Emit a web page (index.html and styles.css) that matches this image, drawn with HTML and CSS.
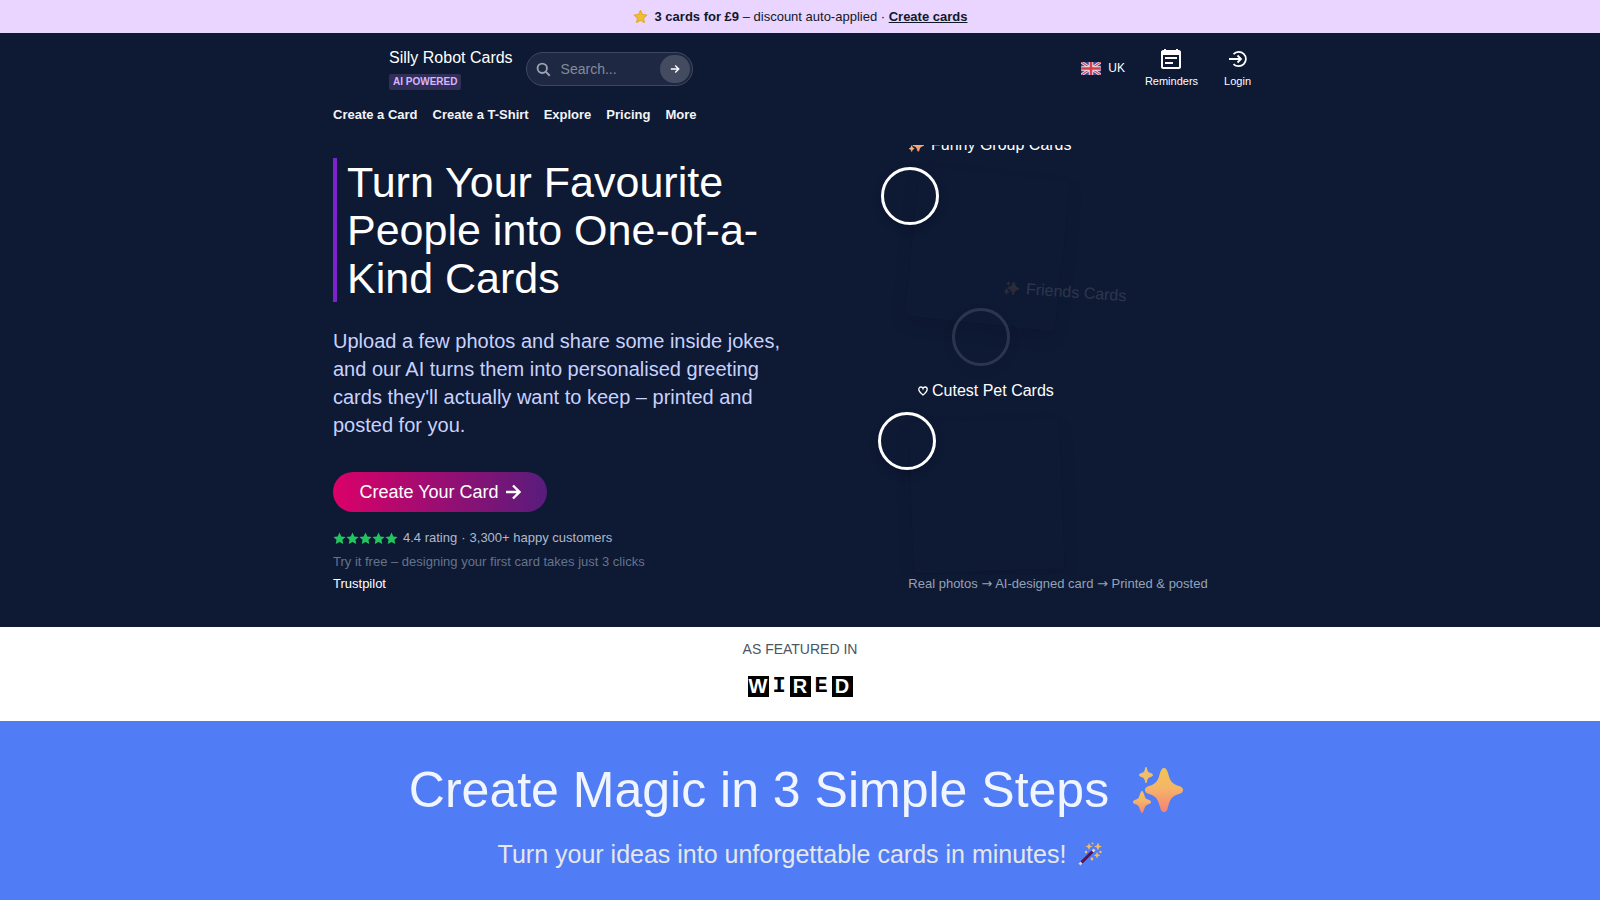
FILE: index.html
```html
<!DOCTYPE html>
<html lang="en-GB">
<head>
    <meta charset="UTF-8">
    <meta name="viewport" content="width=device-width, initial-scale=1.0">
    <title>Silly Robot Cards</title>
    <link rel="stylesheet" href="styles.css">
</head>
<body>

<!-- shared icon shapes -->
<svg class="defs" aria-hidden="true">
    <defs>
        <linearGradient id="gold" x1="0" y1="0" x2="0" y2="1">
            <stop offset="0" stop-color="#f3c552"/>
            <stop offset="0.45" stop-color="#f5b568"/>
            <stop offset="1" stop-color="#f58273"/>
        </linearGradient>
        <symbol id="sparkles" viewBox="0 0 50 46">
            <path fill="url(#gold)" d="M31 1c2 0 3 2 4 5 2 8 4 11 11 13 3 1 4 2 4 4s-1 3-4 4c-7 2-9 5-11 13-1 4-2 5-4 5s-3-1-4-5c-2-8-4-11-11-13-3-1-4-2-4-4s1-3 4-4c7-2 9-5 11-13 1-3 2-5 4-5z"/>
            <path fill="url(#gold)" d="M9 24c1 0 1 1 2 3 1 4 2 5 5 6 2 1 2 1 2 2s0 1-2 2c-3 1-4 2-5 6-1 2-1 3-2 3s-1-1-2-3c-1-4-2-5-5-6-2-1-2-1-2-2s0-1 2-2c3-1 4-2 5-6 1-2 1-3 2-3z"/>
            <path fill="#f1be68" d="M13 0c1 0 1 1 1 2 1 3 2 4 4 4 1 1 2 1 2 2s-1 1-2 2c-2 0-3 1-4 4 0 1 0 2-1 2s-1-1-1-2c-1-3-2-4-4-4-1-1-2-1-2-2s1-1 2-2c2 0 3-1 4-4 0-1 0-2 1-2z"/>
        </symbol>
        <symbol id="star" viewBox="0 0 24 24">
            <path d="M12 1l3.4 7.1 7.8 1-5.7 5.4 1.4 7.8-6.9-3.8-6.9 3.8 1.4-7.8L.8 9.1l7.8-1z"/>
        </symbol>
    </defs>
</svg>

<div class="promo">
    <svg class="promo-star" viewBox="0 0 24 24"><path fill="#eec02e" stroke="#e3ad35" stroke-width="2" stroke-linejoin="round" d="M12 2.500l3 6.200 7 .9-5.200 4.900 1.300 7-6.100-3.400-6.100 3.400 1.300-7L2 9.600l7-.9z"/></svg>
    <p><strong>3 cards for £9</strong> – discount auto-applied · <a href="#">Create cards</a></p>
</div>

<header class="header">
    <div class="wrap">
        <div class="topbar">
            <a class="brand" href="#">
                <span class="brand-name">Silly Robot Cards</span>
                <span class="brand-tag">AI POWERED</span>
            </a>
            <form class="search">
                <svg viewBox="0 0 24 24" fill="none" stroke="currentColor" stroke-width="3"><circle cx="10" cy="10" r="7.500"/><path d="M15.500 15.500L22 22"/></svg>
                <input type="text" placeholder="Search..." aria-label="Search">
                <button type="button" aria-label="Go"><svg viewBox="0 0 24 24" fill="none" stroke="currentColor" stroke-width="3.400"><path d="M2 12h19M12.500 3.500L21 12l-8.500 8.500"/></svg></button>
            </form>
            <div class="tools">
                <a class="country" href="#">
                    <svg viewBox="0 0 60 40">
                        <rect width="60" height="40" fill="#3b4a9b"/>
                        <path d="M0 0l60 40M60 0L0 40" stroke="#e9e4ee" stroke-width="9"/>
                        <path d="M0 0l60 40M60 0L0 40" stroke="#d8485a" stroke-width="4"/>
                        <path d="M30 0v40M0 20h60" stroke="#f3e6ea" stroke-width="14"/>
                        <path d="M30 0v40M0 20h60" stroke="#d93a4c" stroke-width="8"/>
                    </svg>
                    <span>UK</span>
                </a>
                <a class="tool" href="#">
                    <svg viewBox="0 0 20 20"><path fill="currentColor" fill-rule="evenodd" d="M3 0h2v1h10V0h2v1h1c1 0 2 1 2 2v15c0 1-1 2-2 2H2c-1 0-2-1-2-2V3c0-1 1-2 2-2h1zM2 6v12h16V6zM4 8h12v2H4zM4 13h8v2H4z"/></svg>
                    <span>Reminders</span>
                </a>
                <a class="tool" href="#">
                    <svg viewBox="0 0 20 20" fill="none" stroke="currentColor" stroke-width="1.800"><path d="M5.500 5A7.200 7.200 0 1 1 5.500 15M1 10h12M9.500 6.500L13 10l-3.500 3.500"/></svg>
                    <span>Login</span>
                </a>
            </div>
        </div>
        <nav class="menu">
            <a href="#">Create a Card</a>
            <a href="#">Create a T-Shirt</a>
            <a href="#">Explore</a>
            <a href="#">Pricing</a>
            <a href="#">More</a>
        </nav>
    </div>
</header>

<main>
    <section class="hero">
        <div class="wrap hero-grid">
            <div class="hero-text">
                <h1>Turn Your Favourite People into One-of-a-Kind Cards</h1>
                <p class="lead">Upload a few photos and share some inside jokes, and our AI turns them into personalised greeting cards they'll actually want to keep – printed and posted for you.</p>
                <button class="cta" type="button">Create Your Card
                    <svg viewBox="0 0 16 16" fill="none" stroke="currentColor" stroke-width="2.400"><path d="M1 8h13M8 1.500L14.500 8 8 14.500"/></svg>
                </button>
                <div class="rating">
                    <span class="stars">
                        <svg><use href="#star"/></svg><svg><use href="#star"/></svg><svg><use href="#star"/></svg><svg><use href="#star"/></svg><svg><use href="#star"/></svg>
                    </span>
                    <span>4.4 rating</span><span class="dot">·</span><span>3,300+ happy customers</span>
                </div>
                <p class="hint">Try it free – designing your first card takes just 3 clicks</p>
                <a class="trustpilot" href="#">Trustpilot</a>
            </div>
            <div class="hero-art">
                <!-- floating card samples -->
                <div class="stage">
                    <div class="card card-group"></div>
                    <div class="card card-pet"></div>
                    <div class="label label-group"><svg><use href="#sparkles"/></svg>Funny Group Cards</div>
                    <div class="face face-group"></div>
                    <div class="label label-friends"><svg><use href="#sparkles"/></svg>Friends Cards</div>
                    <div class="face face-friends"></div>
                    <div class="label label-pet"><svg class="heart" viewBox="0 0 10 10" fill="none" stroke="currentColor" stroke-width="1.300"><path d="M5 9C2.500 7 .8 5.400.8 3.300.8 1.900 1.700 1 2.900 1 3.900 1 4.700 1.600 5 2.600 5.300 1.600 6.100 1 7.100 1c1.200 0 2.100.9 2.100 2.300C9.200 5.400 7.500 7 5 9z"/></svg>Cutest Pet Cards</div>
                    <div class="face face-pet"></div>
                </div>
                <p class="caption">Real photos <span>→</span> AI-designed card <span>→</span> Printed &amp; posted</p>
            </div>
        </div>
    </section>

    <section class="featured">
        <p>AS FEATURED IN</p>
        <div class="wired"><b>W</b><i>I</i><b>R</b><i>E</i><b>D</b></div>
    </section>

    <section class="steps">
        <h2>Create Magic in 3 Simple Steps <svg><use href="#sparkles"/></svg></h2>
        <p>Turn your ideas into unforgettable cards in minutes!
            <svg viewBox="0 0 24 24">
                <path d="M2 22L16 8" stroke="#52164f" stroke-width="3"/>
                <path d="M1.500 22.500l2-2M14.500 9.500l2-2" stroke="#e8cfe0" stroke-width="3"/>
                <g fill="#f6bb66">
                    <path d="M11 1l1 2.500 2.500 1-2.500 1-1 2.500-1-2.500-2.500-1 2.500-1zM20 .5l1.200 3 2.800 1-2.800 1-1.200 3-1.200-3-2.800-1 2.800-1zM19 10l1 2.300 2.300 1-2.300 1-1 2.300-1-2.300-2.300-1 2.300-1z"/>
                    <circle cx="8" cy="10" r="1.200"/><circle cx="14.500" cy="1.500" r="1"/><circle cx="22.500" cy="10" r="1.200"/><circle cx="14" cy="17" r="1.400"/>
                </g>
            </svg>
        </p>
    </section>
</main>

</body>
</html>
```
FILE: styles.css
```css
* {
    box-sizing: border-box;
}
body {
    font-family: "Liberation Sans", Arial, sans-serif;
    margin: 0;
    background: #0e1934;
    color: white;
}
h1, h2, p {
    margin: 0;
    font-weight: normal;
}
a {
    color: inherit;
    text-decoration: none;
}
svg {
    flex-shrink: 0;
}
.defs {
    position: absolute;
    width: 0;
    height: 0;
}
.wrap {
    max-width: 966px;
    margin: 0 auto;
    padding: 0 16px;
}

/* promo bar */
.promo {
    display: flex;
    justify-content: center;
    align-items: center;
    gap: 7px;
    height: 33px;
    background: #e9d5ff;
    color: #111827;
    font-size: 13px;
}
.promo-star {
    width: 15px;
    height: 15px;
}
.promo a {
    font-weight: bold;
    text-decoration: underline;
}

/* header */
.topbar {
    display: flex;
    align-items: center;
    height: 72px;
    padding: 0 16px 0 56px;
}
.brand {
    display: flex;
    flex-direction: column;
    align-items: flex-start;
    gap: 6px;
}
.brand-name {
    font-size: 16px;
    line-height: 20px;
}
.brand-tag {
    padding: 0 4px;
    border-radius: 2px;
    background: #302f58;
    color: #d8b4fe;
    font-size: 10px;
    font-weight: bold;
    line-height: 16px;
}
.search {
    display: flex;
    align-items: center;
    width: 167px;
    height: 34px;
    margin-left: 13px;
    padding: 0 2px 0 9px;
    border: 1px solid #3e475d;
    border-radius: 17px;
    background: #1e2842;
    color: #9ca3af;
}
.search > svg {
    width: 15px;
    height: 15px;
}
.search input {
    flex: 1;
    min-width: 0;
    padding: 0 0 0 10px;
    border: 0;
    outline: 0;
    background: none;
    color: white;
    font: 14px "Liberation Sans", Arial, sans-serif;
}
.search input::placeholder {
    color: #858b9a;
}
.search button {
    display: flex;
    align-items: center;
    justify-content: center;
    width: 30px;
    height: 28px;
    padding: 0;
    border: 0;
    border-radius: 14px;
    background: #434b60;
    color: white;
}
.search button svg {
    width: 10px;
    height: 10px;
}
.tools {
    display: flex;
    align-items: center;
    margin-left: auto;
    gap: 26px;
    padding-bottom: 2px;
    font-size: 11px;
}
.country {
    display: flex;
    align-items: center;
    gap: 7px;
    margin-right: -6px;
    font-size: 12px;
}
.country svg {
    width: 20px;
    height: 13px;
}
.tool {
    display: flex;
    flex-direction: column;
    align-items: center;
    gap: 6px;
}
.tool svg {
    width: 20px;
    height: 20px;
}
.menu {
    display: flex;
    gap: 15px;
    height: 40px;
    font-size: 13px;
    font-weight: bold;
    line-height: 20px;
    color: #f3f4f6;
}

/* hero */
.hero-grid {
    display: grid;
    grid-template-columns: 450px 1fr;
    gap: 66px;
    padding-bottom: 33px;
}
.hero-text {
    display: flex;
    flex-direction: column;
    align-items: flex-start;
    padding-top: 13px;
}
h1 {
    padding-left: 10px;
    border-left: 4px solid #7e22ce;
    font-size: 43px;
    line-height: 48px;
}
.lead {
    margin-top: 25px;
    color: #c7d2fe;
    font-size: 20px;
    line-height: 28px;
}
.cta {
    display: flex;
    align-items: center;
    justify-content: center;
    gap: 6px;
    width: 214px;
    height: 40px;
    margin-top: 33px;
    padding: 0;
    border: 0;
    border-radius: 20px;
    background: linear-gradient(to right, #db0068, #581c7c);
    color: white;
    font: 18px "Liberation Sans", Arial, sans-serif;
}
.cta svg {
    width: 16px;
    height: 16px;
}
.rating {
    display: flex;
    align-items: center;
    margin-top: 16px;
    color: #b1b9c9;
    font-size: 13px;
    line-height: 20px;
}
.stars {
    display: flex;
    margin-right: 5px;
    fill: #22c55e;
}
.stars svg {
    width: 13px;
    height: 13px;
}
.dot {
    margin: 0 4px;
}
.hint {
    margin-top: 4px;
    color: #64748b;
    font-size: 13px;
    line-height: 20px;
}
.trustpilot {
    margin-top: 2px;
    font-size: 13px;
    line-height: 20px;
}
.hero-art {
    display: flex;
    flex-direction: column;
}
.stage {
    position: relative;
    height: 430px;
    overflow: hidden;
}
.card {
    position: absolute;
    width: 151px;
    height: 151px;
    border-radius: 4px;
    background: #0e1934;
    box-shadow: 0 8px 16px rgba(0, 0, 20, 0.1);
}
.card-group {
    left: 63px;
    top: 28px;
    transform: rotate(6deg);
}
.card-pet {
    left: 62px;
    top: 275px;
    transform: rotate(-2deg);
}
.face {
    position: absolute;
    width: 58px;
    height: 58px;
    border: 3px solid white;
    border-radius: 50%;
    box-shadow: 0 4px 10px rgba(0, 0, 20, 0.2);
}
.face-group {
    left: 32px;
    top: 22px;
}
.face-friends {
    left: 103px;
    top: 163px;
    opacity: 0.12;
}
.face-pet {
    left: 29px;
    top: 267px;
}
.label {
    position: absolute;
    display: flex;
    align-items: center;
    gap: 7px;
    font-size: 16px;
    line-height: 20px;
    white-space: nowrap;
}
.label svg {
    width: 15px;
    height: 14px;
}
.label .heart {
    width: 10px;
    height: 10px;
}
.label-group {
    left: 60px;
    top: -10px;
}
.label-friends {
    left: 155px;
    top: 137px;
    opacity: 0.12;
    transform: rotate(4deg);
}
.label-pet {
    left: 69px;
    top: 236px;
    gap: 4px;
}
.caption {
    color: #94a3b8;
    font-size: 13px;
    line-height: 18px;
    text-align: center;
}
.caption span {
    font-family: "DejaVu Sans", sans-serif;
}

/* featured in */
.featured {
    display: flex;
    flex-direction: column;
    align-items: center;
    gap: 17px;
    padding: 12px 0 24px;
    background: white;
}
.featured p {
    color: #4b5563;
    font-size: 14px;
    line-height: 20px;
}
.wired {
    display: grid;
    grid-template-columns: repeat(5, 21px);
    color: black;
    font-size: 20px;
    line-height: 21px;
    text-align: center;
}
.wired b {
    background: black;
    color: white;
}
.wired i {
    font-family: "Liberation Mono", monospace;
    font-size: 22px;
    font-style: normal;
    font-weight: bold;
}

/* steps */
.steps {
    display: flex;
    flex-direction: column;
    align-items: center;
    padding: 37px 16px 60px;
    background: #507df5;
}
.steps h2 {
    display: flex;
    align-items: center;
    gap: 24px;
    padding-right: 8px;
    color: #f1f5ff;
    font-size: 50px;
    line-height: 64px;
}
.steps h2 svg {
    width: 50px;
    height: 46px;
}
.steps p {
    display: flex;
    align-items: center;
    gap: 12px;
    margin-top: 14px;
    color: #e5e7eb;
    font-size: 25px;
    line-height: 36px;
}
.steps p svg {
    width: 24px;
    height: 24px;
}
```
